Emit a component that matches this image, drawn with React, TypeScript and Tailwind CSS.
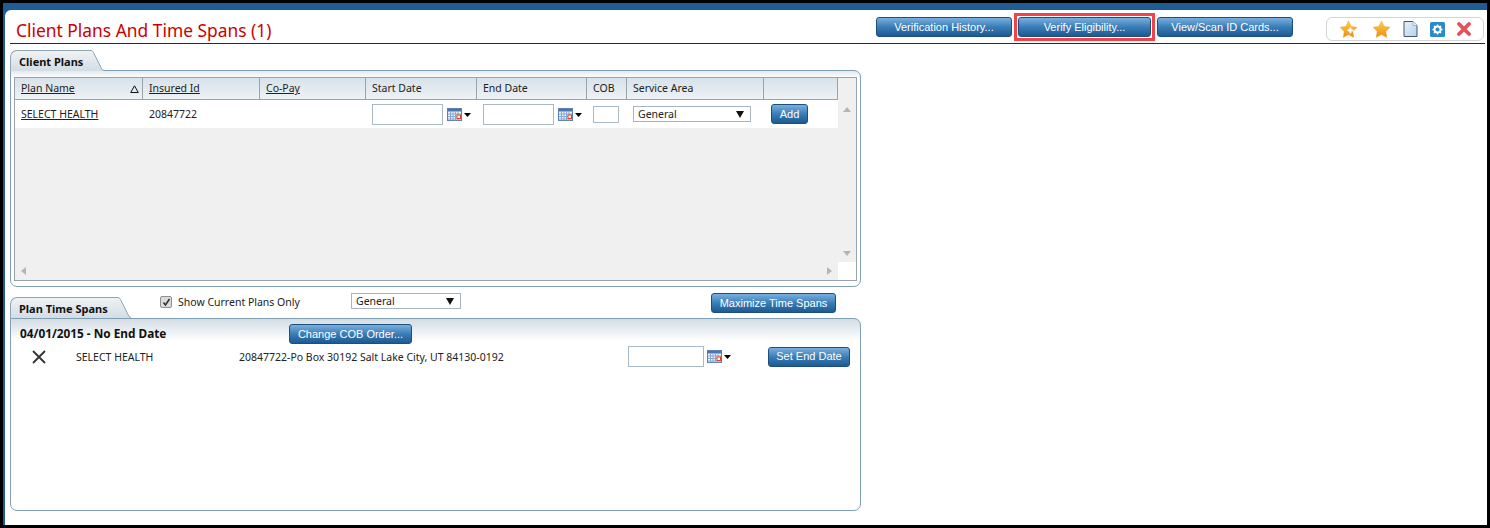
const font = "font-['Noto_Sans',sans-serif]";

function BlueButton({ label, className = '' }: { label: string; className?: string }) {
  return (
    <button className={`flex h-[20px] shrink-0 items-center justify-center rounded-[3px] border border-[#1d4f7e] bg-gradient-to-b from-[#78b0e0] via-[#3a7db6] to-[#1d5a92] font-['Liberation_Sans',sans-serif] text-[11px] leading-none text-white ${className}`}>
      {label}
    </button>
  );
}

function CalendarIcon() {
  return (
    <svg width="24" height="13" viewBox="0 0 24 13" className="shrink-0">
      <rect x="0.5" y="0.5" width="14" height="12" fill="#eef3fb" stroke="#5b7fb5" />
      <rect x="1" y="1" width="13" height="2.5" fill="#4a74b4" />
      <path d="M1 6h13M1 8.5h13M1 11h13M3.5 3.5v9M6 3.5v9M8.5 3.5v9M11 3.5v9" stroke="#8aa6d2" strokeWidth="1" />
      <rect x="10" y="7" width="3.5" height="3.5" fill="#fff" stroke="#e2401f" />
      <path d="M17 5h7l-3.5 4z" fill="#000" />
    </svg>
  );
}

function Select({ className = '' }: { className?: string }) {
  return (
    <div className={`flex h-[16px] items-center justify-between border border-[#a9b6bf] bg-white pl-[4px] pr-[6px] text-[10.5px] leading-none text-[#222] ${className}`}>
      <span>General</span>
      <svg width="8" height="7" viewBox="0 0 8 7"><path d="M0 0h8L4 7z" fill="#111" /></svg>
    </div>
  );
}

function TextBox({ className = '' }: { className?: string }) {
  return <div className={`border border-[#a9bac6] bg-white ${className}`} />;
}

function Tab({ label, id, className = '' }: { label: string; id: string; className?: string }) {
  return (
    <div className="relative z-10 flex h-[21px] shrink-0 items-stretch">
      <div className={`flex items-center rounded-tl-[7px] border-l border-t border-[#8ca6b8] bg-gradient-to-b from-[#f0f2f4] to-[#d3dde4] pl-[8px] text-[11px] font-bold leading-none text-[#111] ${className}`}>
        {label}
      </div>
      <svg width="14" height="21" viewBox="0 0 14 21" className="shrink-0">
        <defs>
          <linearGradient id={id} x1="0" y1="0" x2="0" y2="1">
            <stop offset="0" stopColor="#f0f2f4" />
            <stop offset="1" stopColor="#d3dde4" />
          </linearGradient>
        </defs>
        <path d="M0 0.5h1Q2.5 0.5 3.5 2.5L11 17.5Q12 20.5 14 20.5V21H0z" fill={`url(#${id})`} />
        <path d="M0 0.5h1Q2.5 0.5 3.5 2.5L11 17.5Q12 20.5 14 20.5" fill="none" stroke="#8ca6b8" />
      </svg>
    </div>
  );
}

const columns = [
  { label: 'Plan Name', link: true, sort: true },
  { label: 'Insured Id', link: true },
  { label: 'Co-Pay', link: true },
  { label: 'Start Date' },
  { label: 'End Date' },
  { label: 'COB' },
  { label: 'Service Area' },
  { label: '' },
];

const starPath = 'M10 1l2.8 5.8 6.2.9-4.5 4.4 1.1 6.3L10 15.4l-5.6 3 1.1-6.3L1 7.7l6.2-.9z';

function ToolbarIcons() {
  return (
    <div className="mt-[7px] flex h-[24px] w-[158px] items-center rounded-[6px] border border-[#d4d4d4] bg-white pl-[12px]">
      <svg width="19" height="18" viewBox="0 0 20 19" className="mr-[14px]">
        <defs>
          <linearGradient id="star" x1="0" y1="0" x2="0" y2="1">
            <stop offset="0" stopColor="#fbd04a" />
            <stop offset="1" stopColor="#f28a10" />
          </linearGradient>
          <linearGradient id="doc" x1="0" y1="0" x2="1" y2="1">
            <stop offset="0" stopColor="#e4f0fb" />
            <stop offset="1" stopColor="#b5d2ee" />
          </linearGradient>
        </defs>
        <path d={starPath} fill="url(#star)" stroke="#e8a030" strokeWidth="0.5" />
        <path d="M12 8v6M9 11h6" stroke="#fff" strokeWidth="2" />
      </svg>
      <svg width="19" height="18" viewBox="0 0 20 19" className="mr-[12px]">
        <path d={starPath} fill="url(#star)" stroke="#e8a030" strokeWidth="0.5" />
      </svg>
      <svg width="15" height="16" viewBox="0 0 15 16" className="mr-[12px]">
        <path d="M1 .5h9l4 4v11H1z" fill="url(#doc)" stroke="#44566e" />
        <path d="M10 .5v4h4" fill="#f2f7fc" stroke="#9fb3c8" />
      </svg>
      <svg width="15" height="15" viewBox="0 0 15 15" className="mr-[12px]">
        <rect width="15" height="15" rx="1.5" fill="#2c8ac8" />
        <circle cx="7.5" cy="7.5" r="3" fill="none" stroke="#fff" strokeWidth="2" />
        <path d="M7.5 2.5v2M7.5 10.5v2M2.5 7.5h2M10.5 7.5h2M4 4l1.4 1.4M9.6 9.6L11 11M11 4L9.6 5.4M5.4 9.6L4 11" stroke="#fff" strokeWidth="1.4" />
      </svg>
      <svg width="14" height="14" viewBox="0 0 14 14">
        <path d="M2 2l10 10M12 2L2 12" stroke="#e6505a" strokeWidth="3.8" strokeLinecap="round" />
      </svg>
    </div>
  );
}

export default function App() {
  return (
    <div className={`h-[528px] w-[1490px] overflow-hidden bg-black p-[3px] ${font}`}>
      <div className="h-[522px] w-[1484px] bg-[#1f5c94] pl-[2px] pt-[7px]">
        <div className="h-[515px] rounded-tl-[6px] bg-white pl-[5px] pr-[2px]">
          {/* title bar */}
          <div className="flex h-[34px] items-center border-b border-[#8b0000] pl-[6px] pr-[1px]">
            <h1 className="mt-[8px] text-[17.4px] font-normal leading-none text-[#cc0000]">Client Plans And Time Spans (1)</h1>
            <div className="ml-auto flex items-start self-start">
              <BlueButton label="Verification History..." className="mr-[2px] mt-[7px] w-[136px]" />
              <div className="mt-[3px] flex h-[28px] w-[141px] items-center justify-center border-[3px] border-[#f0434a]">
                <BlueButton label="Verify Eligibility..." className="w-[133px]" />
              </div>
              <BlueButton label="View/Scan ID Cards..." className="ml-[2px] mr-[33px] mt-[7px] w-[136px]" />
              <ToolbarIcons />
            </div>
          </div>

          <div className="w-[851px]">
            {/* client plans */}
            <div className="mt-[6px] -mb-px flex">
              <Tab label="Client Plans" id="tab-plans" className="w-[80px]" />
            </div>
            <div className="h-[217px] rounded-[7px] rounded-tl-none border border-[#7f9fb5] bg-[linear-gradient(#e3e9ee,#fff_7px)] px-[3px] pb-[5px] pt-[6px]">
              <div className="flex h-full flex-col border border-[#9aa3ab] bg-[#f0f0f0]">
                <div className="flex min-h-0 flex-1">
                  <div className="w-[823px]">
                    <div className="grid h-[22px] grid-cols-[128px_117px_106px_111px_110px_40px_137px_74px] border-b border-[#9aa3ab] bg-gradient-to-b from-[#d8e2ea] to-[#edf2f5] text-[10.5px] leading-none text-[#222]">
                      {columns.map((col) => (
                        <div key={col.label} className="flex items-center justify-between border-r border-[#9aa3ab] pl-[6px] pr-[3px]">
                          <span className={col.link ? 'underline' : ''}>{col.label}</span>
                          {col.sort && (
                            <svg width="9" height="8" viewBox="0 0 9 8"><path d="M4.5 .8L8.3 7.5H.7z" fill="none" stroke="#111" /></svg>
                          )}
                        </div>
                      ))}
                    </div>
                    <div className="grid h-[28px] grid-cols-[128px_117px_106px_111px_110px_40px_137px_74px] bg-white text-[10.5px] leading-none text-[#222]">
                      <div className="flex items-center pl-[6px] underline">SELECT HEALTH</div>
                      <div className="flex items-center pl-[6px]">20847722</div>
                      <div />
                      <div className="flex items-center pl-[6px]">
                        <TextBox className="mr-[4px] h-[21px] w-[71px]" />
                        <CalendarIcon />
                      </div>
                      <div className="flex items-center pl-[6px]">
                        <TextBox className="mr-[4px] h-[21px] w-[71px]" />
                        <CalendarIcon />
                      </div>
                      <div className="flex items-center pl-[6px]">
                        <TextBox className="h-[17px] w-[26px]" />
                      </div>
                      <div className="flex items-center pl-[6px]">
                        <Select className="w-[118px]" />
                      </div>
                      <div className="flex items-center pl-[7px]">
                        <BlueButton label="Add" className="w-[37px]" />
                      </div>
                    </div>
                  </div>
                  {/* scroll column */}
                  <div className="flex flex-1 flex-col items-center justify-between pb-[6px] pt-[29px]">
                    <svg width="8" height="5" viewBox="0 0 8 5"><path d="M4 0l4 5H0z" fill="#b5b5b5" /></svg>
                    <svg width="8" height="5" viewBox="0 0 8 5"><path d="M0 0h8L4 5z" fill="#b5b5b5" /></svg>
                  </div>
                </div>
                <div className="flex h-[18px] items-center">
                  <div className="flex w-[823px] items-center justify-between pl-[6px] pr-[6px]">
                    <svg width="5" height="8" viewBox="0 0 5 8"><path d="M5 0v8L0 4z" fill="#b5b5b5" /></svg>
                    <svg width="5" height="8" viewBox="0 0 5 8"><path d="M0 0v8l5-4z" fill="#b5b5b5" /></svg>
                  </div>
                  <div className="h-full flex-1 bg-white" />
                </div>
              </div>
            </div>

            {/* plan time spans */}
            <div className="mt-[5px] flex h-[26px] items-start">
              <div className="mt-[5px]">
                <Tab label="Plan Time Spans" id="tab-spans" className="w-[107px]" />
              </div>
              <label className="ml-[29px] mt-[4px] flex items-center whitespace-nowrap text-[10.5px] leading-none text-[#222]">
                <span className="mr-[6px] flex h-[12px] w-[12px] items-center justify-center rounded-[2px] border border-[#8f8f8f] bg-[#dcdcdc]">
                  <svg width="9" height="9" viewBox="0 0 9 9"><path d="M1.5 4.5l2 2.5 4-6" fill="none" stroke="#333" strokeWidth="1.6" /></svg>
                </span>
                <span className="w-[122px]">Show Current Plans Only</span>
              </label>
              <div className="ml-[51px] mt-[1px] w-[110px]">
                <Select className="w-[110px]" />
              </div>
              <BlueButton label="Maximize Time Spans" className="ml-[250px] mt-[1px] w-[125px]" />
            </div>
            <div className="h-[193px] rounded-[7px] rounded-tl-none border border-[#7f9fb5] bg-[linear-gradient(#d3dde4,#fff_22px)]">
              <div className="flex h-[25px] items-center pl-[9px] pt-[5px]">
                <div className="w-[269px] text-[11.8px] font-bold leading-none text-[#111]">04/01/2015 - No End Date</div>
                <BlueButton label="Change COB Order..." className="w-[123px]" />
              </div>
              <div className="mt-[2px] flex h-[21px] items-center text-[10.5px] leading-none text-[#222]">
                <svg width="14" height="14" viewBox="0 0 14 14" className="ml-[21px] mr-[30px] shrink-0">
                  <path d="M1 1l12 12M13 1L1 13" stroke="#333" strokeWidth="1.8" />
                </svg>
                <span className="w-[163px] pt-[1px]">SELECT HEALTH</span>
                <span className="w-[389px] pt-[1px]">20847722-Po Box 30192 Salt Lake City, UT 84130-0192</span>
                <TextBox className="mr-[3px] h-[21px] w-[76px]" />
                <CalendarIcon />
                <BlueButton label="Set End Date" className="ml-[37px] w-[82px]" />
              </div>
            </div>
          </div>
        </div>
      </div>
    </div>
  );
}
